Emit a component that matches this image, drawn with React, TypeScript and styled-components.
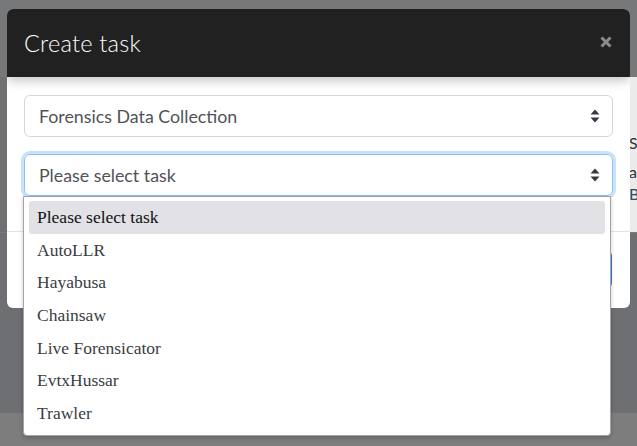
import React from "react";
import styled, { createGlobalStyle } from "styled-components";

const Global = createGlobalStyle`
  html, body { margin: 0; padding: 0; width: 637px; height: 446px; overflow: hidden; }
  body { font-family: Lato, "Liberation Sans", sans-serif; }
  #root { width: 637px; height: 446px; }
`;

const Page = styled.div`
  position: relative;
  width: 637px;
  height: 446px;
  display: flex;
  flex-direction: column;
  background: #6e6f72;
`;

const TopBand = styled.div`
  height: 77px;
  background: #77787a;
`;

const MidBand = styled.div`
  height: 155px;
  display: grid;
  grid-template-columns: 1fr 7px;
  background: #6f7072;
`;

const SideCard = styled.div`
  background: #ebebeb;
  display: flex;
  flex-direction: column;
  padding-top: 56px;
  font-family: Lato, "Liberation Sans", sans-serif;
  font-size: 16px;
  line-height: 20px;
  overflow: hidden;
  white-space: nowrap;
`;

const SideText = styled.span<{ $c: string; $gap: number }>`
  color: ${(p) => p.$c};
  margin-top: ${(p) => p.$gap}px;
  margin-left: -1px;
`;

const LowBand = styled.div`
  height: 180px;
  background: #6e6f72;
  border-top: 1px solid #7c7d7f;
`;

const FootBand = styled.div`
  flex: 1;
  background: #7d7d7d;
`;

const Modal = styled.div`
  position: absolute;
  left: 7px;
  top: 9px;
  width: 623px;
  height: 299px;
  background: #fff;
  border-radius: 6px;
  overflow: hidden;
  display: flex;
  flex-direction: column;
`;

const Header = styled.div`
  height: 68px;
  flex: none;
  background: #212121;
  display: flex;
  align-items: center;
  justify-content: space-between;
  padding: 0 18px 0 17px;
  box-shadow: 0 4px 10px rgba(0, 0, 0, 0.22);
  position: relative;
  z-index: 1;
`;

const Title = styled.h5`
  margin: 0;
  color: #fff;
  font-family: Lato, "Liberation Sans", sans-serif;
  font-weight: 300;
  font-size: 23.6px;
  letter-spacing: 0.2px;
`;

const Close = styled.button`
  border: 0;
  background: none;
  padding: 0;
  width: 12px;
  height: 12px;
  display: flex;
  margin-top: -2px;
`;

const Body = styled.div`
  height: 154px;
  flex: none;
  padding: 18px 17px 0 17px;
  box-sizing: border-box;
  display: flex;
  flex-direction: column;
  gap: 17px;
`;

const Select = styled.div<{ $focus?: boolean }>`
  height: 42px;
  box-sizing: border-box;
  border: 1px solid ${(p) => (p.$focus ? "#8cc0f7" : "#d3d6da")};
  border-radius: 6px;
  display: flex;
  align-items: center;
  justify-content: space-between;
  padding: 0 12px 0 14px;
  color: #4f5358;
  font-weight: 400;
  font-size: 17.8px;
  box-shadow: ${(p) => (p.$focus ? "0 0 0 3px rgba(100, 170, 245, 0.35)" : "none")};
`;

const Footer = styled.div`
  flex: 1;
  border-top: 1px solid #e3e3e3;
  display: flex;
  align-items: center;
  justify-content: flex-end;
  padding: 0 18px 0 17px;
`;

const Button = styled.button`
  height: 37px;
  width: 90px;
  border: 0;
  border-radius: 5px;
  background: #2f7fd8;
  color: #fff;
  margin-top: -2px;
  font-family: Lato, "Liberation Sans", sans-serif;
  font-size: 16px;
`;

const Dropdown = styled.ul`
  position: absolute;
  left: 23px;
  top: 196px;
  width: 588px;
  height: 240px;
  box-sizing: border-box;
  margin: 0;
  padding: 4px 5px;
  list-style: none;
  background: #fff;
  border: 1px solid #a3a3a3;
  border-radius: 0 0 4px 4px;
  box-shadow: 0 2px 4px rgba(0, 0, 0, 0.2);
  display: flex;
  flex-direction: column;
`;

const Option = styled.li<{ $active?: boolean }>`
  height: 32.7px;
  flex: none;
  display: flex;
  align-items: center;
  padding-left: 8px;
  border-radius: 3px;
  background: ${(p) => (p.$active ? "#e1e1e6" : "transparent")};
  color: ${(p) => (p.$active ? "#111" : "#3a3d42")};
  font-family: "Liberation Serif", "Times New Roman", serif;
  font-size: 17.5px;
`;

const Arrows = () => (
  <svg width="10" height="14" viewBox="0 0 10 14">
    <path d="M5 0.5 L9.5 5.5 H0.5 Z" fill="#343a40" />
    <path d="M5 13.5 L9.5 8.5 H0.5 Z" fill="#343a40" />
  </svg>
);

const options = [
  "Please select task",
  "AutoLLR",
  "Hayabusa",
  "Chainsaw",
  "Live Forensicator",
  "EvtxHussar",
  "Trawler",
];

export default function App() {
  return (
    <>
      <Global />
      <Page>
        <TopBand />
        <MidBand>
          <div />
          <SideCard>
            <SideText $c="#333" $gap={0}>Sa</SideText>
            <SideText $c="#333" $gap={9}>ai</SideText>
            <SideText $c="#2c4a66" $gap={2}>Bu</SideText>
          </SideCard>
        </MidBand>
        <LowBand />
        <FootBand />
        <Modal>
          <Header>
            <Title>Create task</Title>
            <Close aria-label="Close">
              <svg width="12" height="12" viewBox="0 0 12 12">
                <path d="M1.5 1.5 L10.5 10.5 M10.5 1.5 L1.5 10.5" stroke="#8b8b8b" strokeWidth="3" />
              </svg>
            </Close>
          </Header>
          <Body>
            <Select>
              <span>Forensics Data Collection</span>
              <Arrows />
            </Select>
            <Select $focus>
              <span>Please select task</span>
              <Arrows />
            </Select>
          </Body>
          <Footer>
            <Button>Create</Button>
          </Footer>
        </Modal>
        <Dropdown>
          {options.map((o, i) => (
            <Option key={o} $active={i === 0}>
              {o}
            </Option>
          ))}
        </Dropdown>
      </Page>
    </>
  );
}
